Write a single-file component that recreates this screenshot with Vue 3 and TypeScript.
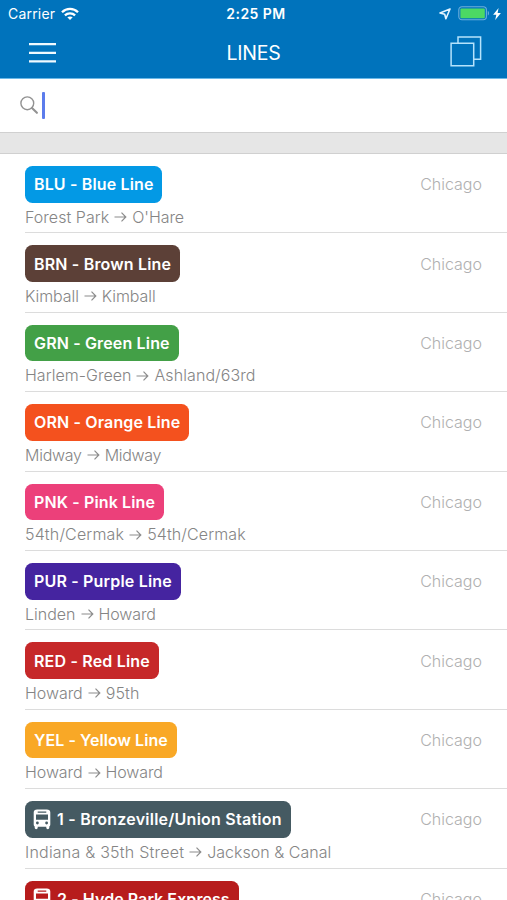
<script setup lang="ts">
interface TransitLine {
  name: string
  route: [string, string]
  tone: string
  tracking: number
  routeTracking: [number, number]
  bus?: boolean
}

const city = 'Chicago'

const lines: TransitLine[] = [
  { name: 'BLU - Blue Line', route: ['Forest Park', "O'Hare"], tone: 'blue', tracking: 0.14, routeTracking: [0.04, -0.06] },
  { name: 'BRN - Brown Line', route: ['Kimball', 'Kimball'], tone: 'brown', tracking: 0.17, routeTracking: [-0.08, -0.08] },
  { name: 'GRN - Green Line', route: ['Harlem-Green', 'Ashland/63rd'], tone: 'green', tracking: 0.15, routeTracking: [0.03, 0.09] },
  { name: 'ORN - Orange Line', route: ['Midway', 'Midway'], tone: 'orange', tracking: 0.15, routeTracking: [-0.25, -0.3] },
  { name: 'PNK - Pink Line', route: ['54th/Cermak', '54th/Cermak'], tone: 'pink', tracking: 0.13, routeTracking: [0.16, 0.12] },
  { name: 'PUR - Purple Line', route: ['Linden', 'Howard'], tone: 'purple', tracking: 0.18, routeTracking: [0, -0.12] },
  { name: 'RED - Red Line', route: ['Howard', '95th'], tone: 'red', tracking: 0.18, routeTracking: [-0.05, 0.15] },
  { name: 'YEL - Yellow Line', route: ['Howard', 'Howard'], tone: 'yellow', tracking: 0.06, routeTracking: [-0.08, -0.12] },
  { name: '1 - Bronzeville/Union Station', route: ['Indiana & 35th Street', 'Jackson & Canal'], tone: 'slate', tracking: 0.24, routeTracking: [0.22, 0.03], bus: true },
  { name: '2 - Hyde Park Express', route: ['Hyde Park', 'Navy Pier'], tone: 'crimson', tracking: 0.08, routeTracking: [0, 0], bus: true },
]
</script>

<template>
  <div class="screen">
    <header class="header">
      <div class="status">
        <div class="carrier">
          <span>Carrier</span>
          <svg class="wifi" width="18" height="14" viewBox="0 0 18 14" fill="none" stroke="#fff" stroke-width="2.3">
            <path d="M1 5.2C5.5.7 12.5.7 17 5.2" />
            <path d="M3.9 8.4C6.7 5.7 11.3 5.7 14.1 8.4" />
            <path d="M9 13 6.3 10.3C7.8 9.1 10.2 9.1 11.7 10.3Z" fill="#fff" stroke="none" />
          </svg>
        </div>
        <span class="time">2:25 PM</span>
        <div class="power">
          <svg width="12" height="12" viewBox="0 0 12 12" fill="none" stroke="#e4f4ff" stroke-width="1.6" stroke-linejoin="round">
            <path d="M11 1 1 5 5.7 6.3 6.9 10.8Z" />
          </svg>
          <svg class="battery" width="32" height="15" viewBox="0 0 32 15">
            <rect x=".8" y=".8" width="27.6" height="13" rx="3.2" fill="none" stroke="#6cafdc" stroke-width="1.1" />
            <rect x="2.4" y="2.4" width="24.4" height="9.8" rx="1" fill="#4cd964" />
            <path d="M29.8 5v4.6c1.6-.5 1.6-4.1 0-4.6Z" fill="#6cafdc" />
          </svg>
          <svg width="8" height="12" viewBox="0 0 8 12" fill="#fff"><path d="M5.6 0 .1 6.8H3.3L2.2 12 7.9 4.9H4.6Z" /></svg>
        </div>
      </div>
      <div class="navbar">
        <button class="icon-button" aria-label="Menu">
          <svg width="27" height="22" viewBox="0 0 27 22" stroke="#f0faff" stroke-width="2.3">
            <path d="M0 2.1h27M0 10.8h27M0 19.4h27" />
          </svg>
        </button>
        <h1>LINES</h1>
        <button class="icon-button windows" aria-label="Windows">
          <svg width="32" height="31" viewBox="0 0 32 31" fill="none" stroke="#b5e3fc" stroke-width="1.5">
            <path d="M1.1 7.2h22.6v22.6H1.1ZM8 7V1.1h22.6v22.2h-6.8" />
          </svg>
        </button>
      </div>
    </header>

    <div class="search">
      <svg width="19" height="19" viewBox="0 0 19 19" fill="none" stroke="#929292" stroke-linecap="round">
        <circle cx="7.3" cy="7.3" r="6.4" stroke-width="1.4" />
        <path d="m12 12 4.9 4.8" stroke-width="2.1" />
      </svg>
      <span class="caret"></span>
    </div>
    <div class="divider"></div>

    <main class="list">
      <article v-for="line in lines" :key="line.name" class="row">
        <div class="top">
          <div class="badge" :class="line.tone">
            <svg v-if="line.bus" class="bus" width="18" height="21" viewBox="0 0 18 21">
              <path fill="#fff" fill-rule="evenodd" d="M4.2.6h9.6c2.3 0 3.5 1.1 3.5 3v11.9c0 .9-.3 1.5-1 2v1.3c0 1.9-3 1.9-3 0v-1.1H4.7v1.1c0 1.9-3 1.9-3 0v-1.3c-.7-.5-1-1.1-1-2V3.6c0-1.9 1.2-3 3.5-3ZM4.7 2.5v1.2h8.6V2.5ZM3 5.5v5.3h12V5.5ZM4.4 12.6a1.4 1.4 0 1 0 0 2.8 1.4 1.4 0 0 0 0-2.8Zm9.2 0a1.4 1.4 0 1 0 0 2.8 1.4 1.4 0 0 0 0-2.8Z" />
            </svg>
            <span :style="{ letterSpacing: `${line.tracking}px` }">{{ line.name }}</span>
          </div>
          <span class="city">{{ city }}</span>
        </div>
        <p class="route">
          <span :style="{ letterSpacing: `${line.routeTracking[0]}px` }">{{ line.route[0] }}</span>
          <svg width="13" height="12" viewBox="0 0 13 12" fill="none" stroke="#8c8c8c" stroke-width="1.2">
            <path d="M.5 6h11.3M7.5 1.7 11.8 6l-4.3 4.3" />
          </svg>
          <span :style="{ letterSpacing: `${line.routeTracking[1]}px` }">{{ line.route[1] }}</span>
        </p>
      </article>
    </main>
  </div>
</template>

<style>
body {
  margin: 0;
  background: #fff;
}
</style>

<style scoped>
.screen {
  width: 507px;
  height: 900px;
  overflow: hidden;
  background: #fff;
  font-family: Inter, "Liberation Sans", sans-serif;
}
.header {
  height: 79px;
  box-sizing: border-box;
  border-bottom: 1px solid #6bb9e8;
  background: #0073bc;
  color: #fff;
}
.status {
  display: grid;
  grid-template-columns: 1fr auto 1fr;
  align-items: center;
  height: 27px;
  padding: 0 6px 0 8px;
  font-size: 14px;
}
.carrier {
  display: flex;
  align-items: center;
  gap: 6px;
  letter-spacing: 0.2px;
}
.time {
  padding-left: 3px;
  font-weight: 600;
  letter-spacing: 0.45px;
}
.power {
  display: flex;
  align-items: center;
  justify-content: flex-end;
  gap: 3px;
}
.battery {
  margin-left: 4px;
}
.navbar {
  display: grid;
  grid-template-columns: 1fr auto 1fr;
  align-items: center;
  height: 51px;
  padding: 0 25px 0 29px;
}
.icon-button {
  display: flex;
  justify-self: start;
  padding: 0;
  border: 0;
  background: none;
}
.windows {
  justify-self: end;
  margin-bottom: 3px;
}
h1 {
  margin: 1px 4px 0 0;
  font-size: 19.5px;
  font-weight: 400;
  letter-spacing: -0.2px;
}
.search {
  display: flex;
  align-items: center;
  height: 53px;
  padding-left: 20px;
  gap: 3px;
}
.caret {
  width: 3px;
  height: 27px;
  border-radius: 1px;
  background: #5c7cec;
}
.divider {
  height: 22px;
  box-sizing: border-box;
  border: solid #d0d0d0;
  border-width: 1px 0;
  background: #e6e6e6;
}
.list {
  padding-left: 25px;
}
.row {
  height: 79.4px;
  box-sizing: border-box;
  padding-top: 12px;
  border-bottom: 1px solid #dcdcdc;
}
.top {
  display: flex;
  align-items: center;
  justify-content: space-between;
  padding-right: 25px;
}
.badge {
  display: flex;
  align-items: center;
  gap: 6px;
  height: 36.6px;
  padding: 0 9px;
  border-radius: 7.5px;
  color: #fff;
  font-size: 16px;
  font-weight: 600;
  white-space: nowrap;
}
.bus {
  margin-left: -1px;
}
.city {
  color: #b0b0b0;
  font-size: 16px;
  font-weight: 300;
}
.route {
  display: flex;
  align-items: center;
  gap: 5px;
  margin: 4px 0 0;
  color: #858585;
  font-size: 16px;
  font-weight: 300;
  line-height: 21px;
  white-space: nowrap;
}
.blue { background: #0399e5; }
.brown { background: #5c4037; }
.green { background: #43a047; }
.orange { background: #f4511e; }
.pink { background: #ec407a; }
.purple { background: #4524a0; }
.red { background: #c62829; }
.yellow { background: #f9a826; }
.slate { background: #455a62; }
.crimson { background: #b71c1c; }
</style>
